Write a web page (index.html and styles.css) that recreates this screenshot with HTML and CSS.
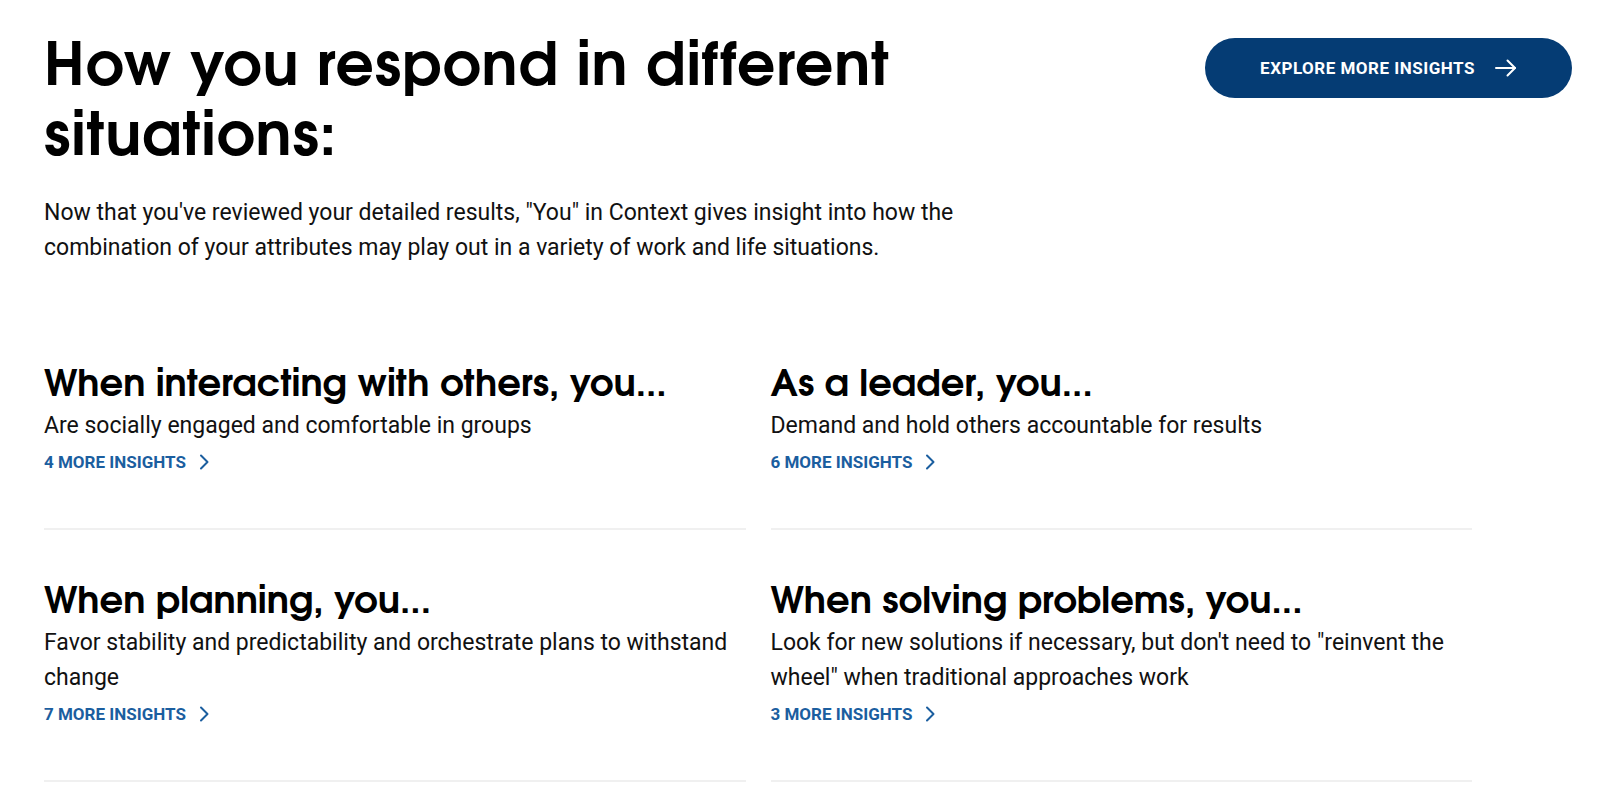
FILE: index.html
```html
<!DOCTYPE html>
<html lang="en">
<head>
<meta charset="utf-8">
<title>How you respond in different situations</title>
<link rel="stylesheet" href="styles.css">
</head>
<body>
<main class="page">
  <header class="top">
    <div class="intro">
      <h1 class="title">How you respond in different situations:</h1>
      <p class="lead">Now that you've reviewed your detailed results, "You" in Context gives insight into how the combination of your attributes may play out in a variety of work and life situations.</p>
    </div>
    <a class="cta" href="#">
      <span>EXPLORE MORE INSIGHTS</span>
      <svg class="cta-arrow" width="22" height="18" viewBox="0 0 22 18" fill="none" stroke="currentColor" stroke-width="2" stroke-linecap="round" stroke-linejoin="round"><path d="M1 9h19"/><path d="M12.5 1.5 20 9l-7.5 7.5"/></svg>
    </a>
  </header>

  <section class="grid">
    <article class="card">
      <h2 class="card-title">When interacting with others, you...</h2>
      <p class="card-text">Are socially engaged and comfortable in groups</p>
      <a class="more" href="#">4 MORE INSIGHTS <svg class="chev" width="12" height="16" viewBox="0 0 12 16" fill="none" stroke="currentColor" stroke-width="2" stroke-linecap="round" stroke-linejoin="round"><path d="M3 1.5 9.5 8 3 14.5"/></svg></a>
    </article>
    <article class="card">
      <h2 class="card-title">As a leader, you...</h2>
      <p class="card-text">Demand and hold others accountable for results</p>
      <a class="more" href="#">6 MORE INSIGHTS <svg class="chev" width="12" height="16" viewBox="0 0 12 16" fill="none" stroke="currentColor" stroke-width="2" stroke-linecap="round" stroke-linejoin="round"><path d="M3 1.5 9.5 8 3 14.5"/></svg></a>
    </article>
    <article class="card">
      <h2 class="card-title">When planning, you...</h2>
      <p class="card-text">Favor stability and predictability and orchestrate plans to withstand change</p>
      <a class="more" href="#">7 MORE INSIGHTS <svg class="chev" width="12" height="16" viewBox="0 0 12 16" fill="none" stroke="currentColor" stroke-width="2" stroke-linecap="round" stroke-linejoin="round"><path d="M3 1.5 9.5 8 3 14.5"/></svg></a>
    </article>
    <article class="card">
      <h2 class="card-title">When solving problems, you...</h2>
      <p class="card-text">Look for new solutions if necessary, but don't need to "reinvent the wheel" when traditional approaches work</p>
      <a class="more" href="#">3 MORE INSIGHTS <svg class="chev" width="12" height="16" viewBox="0 0 12 16" fill="none" stroke="currentColor" stroke-width="2" stroke-linecap="round" stroke-linejoin="round"><path d="M3 1.5 9.5 8 3 14.5"/></svg></a>
    </article>
  </section>
</main>
</body>
</html>
```

FILE: styles.css
```css
* { box-sizing: border-box; }

html, body {
  margin: 0;
  padding: 0;
  background: #ffffff;
}

body {
  font-family: Roboto, "Liberation Sans", Arial, sans-serif;
  color: #111;
}

.page {
  padding: 0 28px 0 44px;
}

.top {
  display: flex;
  justify-content: space-between;
  align-items: flex-start;
}

.intro {
  width: 940px;
}

.title {
  margin: 34px 0 0;
  font-family: "Century Gothic", "URW Gothic", "URW Gothic L", "TeX Gyre Adventor", Questrial, Poppins, Montserrat, Lato, sans-serif;
  font-weight: 700;
  font-size: 60px;
  line-height: 70px;
  letter-spacing: 0.8px;
  color: #000;
  width: 900px;
}

.lead {
  margin: 21px 0 0;
  font-size: 23px;
  line-height: 35px;
  color: #111;
}

.cta {
  margin-top: 38px;
  display: flex;
  align-items: center;
  justify-content: center;
  gap: 20px;
  width: 367px;
  height: 60px;
  border-radius: 30px;
  background: #053c74;
  color: #fff;
  text-decoration: none;
  font-size: 17px;
  font-weight: 700;
  letter-spacing: 0.5px;
  padding-left: 0;
}

.cta-arrow { display: block; }

.grid {
  margin-top: 48px;
  width: 1428px;
  display: grid;
  grid-template-columns: 1fr 1fr;
  column-gap: 25px;
}

.card {
  padding: 51px 0 54px;
  border-bottom: 2px solid #f0f0f0;
}

.card-title {
  margin: 0;
  font-family: "Century Gothic", "URW Gothic", "URW Gothic L", "TeX Gyre Adventor", Questrial, Poppins, Montserrat, Lato, sans-serif;
  font-weight: 700;
  font-size: 37px;
  line-height: 44px;
  color: #000;
}

.card-text {
  margin: 0;
  font-size: 23px;
  line-height: 35px;
  color: #111;
}

.more {
  margin-top: 7px;
  display: inline-flex;
  align-items: center;
  gap: 12px;
  font-size: 17px;
  line-height: 24px;
  font-weight: 700;
  color: #1b5e9f;
  text-decoration: none;
}

.chev { display: block; }
```
